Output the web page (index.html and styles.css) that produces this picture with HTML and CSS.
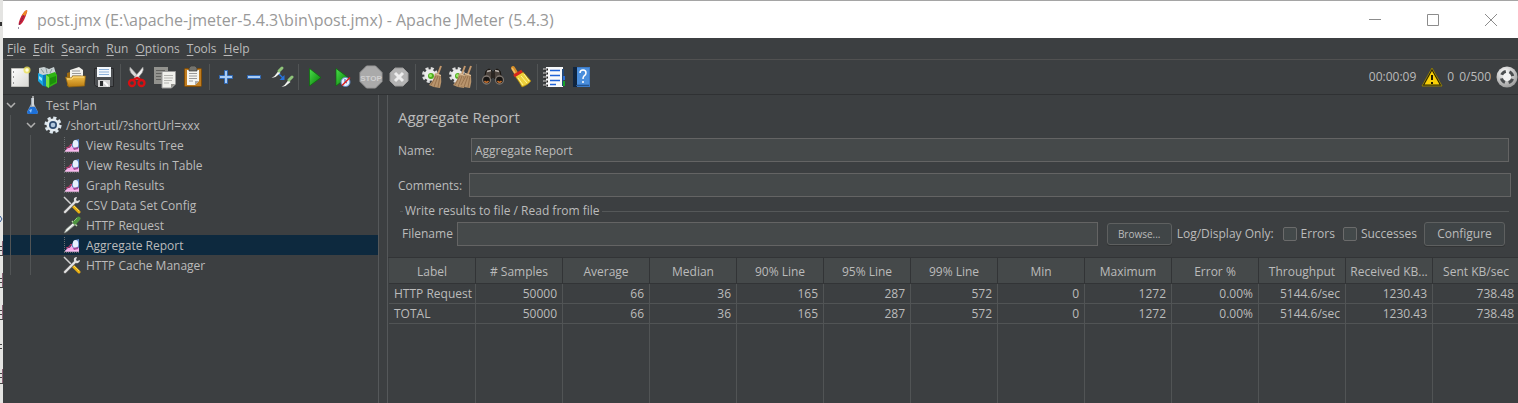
FILE: index.html
```html
<!DOCTYPE html>
<html lang="en">
<head>
<meta charset="utf-8">
<title>post.jmx - Apache JMeter (5.4.3)</title>
<link rel="stylesheet" href="styles.css">
</head>
<body>
<svg class="defs" aria-hidden="true">
  <defs>
    <linearGradient id="green" x1="0" y1="0" x2="1" y2="1"><stop offset="0" stop-color="#4be04b"/><stop offset="1" stop-color="#067806"/></linearGradient>
    <linearGradient id="gold" x1="0" y1="0" x2="0" y2="1"><stop offset="0" stop-color="#f2c04a"/><stop offset="1" stop-color="#b87a10"/></linearGradient>
    <linearGradient id="paper" x1="0" y1="0" x2="1" y2="1"><stop offset="0" stop-color="#ffffff"/><stop offset="1" stop-color="#d8d8d4"/></linearGradient>
    <radialGradient id="silver" cx=".4" cy=".3" r=".8"><stop offset="0" stop-color="#ffffff"/><stop offset="1" stop-color="#8f8f8f"/></radialGradient>
    <symbol id="i-chart" viewBox="0 0 18 18">
      <path d="M1.500 1v16M1 16.500h16" stroke="#6a6d6f" stroke-dasharray="1 1" fill="none"/>
      <path d="M2 15.500l2-3 3-1 2-3 4 3 3-1v5z" fill="#f9a9ea"/>
      <path d="M3 12l3-1 2-3 2 3" stroke="#c2356e" fill="none"/>
      <path d="M9 8l3-4 4-1v9l-3 1-4-2z" fill="#5f86c8"/>
      <ellipse cx="12.500" cy="8" rx="2.800" ry="4" fill="#e6f0ff"/>
      <path d="M10 12l5-1v2l-4 1z" fill="#a04a9a"/>
      <path d="M2 15h14" stroke="#fccdf5"/>
    </symbol>
    <symbol id="i-tools" viewBox="0 0 18 18">
      <path d="M1 1l9 9" stroke="#cfcfcf" stroke-width="1.500"/>
      <path d="M10 10l6 6" stroke="#e8ae12" stroke-width="3" stroke-linecap="round"/>
      <path d="M10 9l6 6" stroke="#ffdc4a"/>
      <path d="M2 16l10-10" stroke="#666" stroke-width="3.200" stroke-linecap="round"/>
      <path d="M2 16l10-10" stroke="#e4e4e4" stroke-width="2" stroke-linecap="round"/>
      <path d="M14 1q-4 0-3 4 1 3 4 2 2-1 2-3l-3 1-1-1z" fill="#dcdcdc"/>
    </symbol>
    <symbol id="i-pipette" viewBox="0 0 18 18">
      <path d="M1 17l2-4 7-6 2 2-7 6-3 2z" fill="#d9dfd9" stroke="#6c726c" stroke-width=".6"/>
      <path d="M3 15l7-7" stroke="#f6faf6"/>
      <path d="M9 5l5 5" stroke="#b8d8a8" stroke-width="1.500"/>
      <path d="M12 6.500l3.500-4" stroke="#4e9440" stroke-width="4" stroke-linecap="round"/>
      <path d="M11 5l3-3" stroke="#8cc878"/>
    </symbol>
    <symbol id="i-gear" viewBox="0 0 24 24">
      <circle cx="10" cy="10" r="6.500" fill="none" stroke="#dedede" stroke-width="3" stroke-dasharray="2.900 2.200"/>
      <circle cx="10" cy="10" r="5.700" fill="#ececec"/>
      <circle cx="11" cy="11" r="3" fill="#4fae1c"/><circle cx="10.500" cy="10.500" r="1.500" fill="#9be86a"/>
    </symbol>
    <symbol id="i-broom" viewBox="0 0 24 24">
      <path d="M21 1l-3 8" stroke="#c2976c" stroke-width="2"/>
      <path d="M15 8l6 2q1 7-1 13-6 0-11-3 5-5 6-12z" fill="#b8946c"/>
      <path d="M16 11l-5 9m7-9l-4 11m6-11l-2 11" stroke="#8a6440" stroke-width=".7" fill="none"/>
      <path d="M15 8.500l6 2" stroke="#e6c8a2"/>
    </symbol>
  </defs>
</svg>

<div class="desktop">
  <svg class="backdrop" width="3" height="403" viewBox="0 0 3 403" aria-hidden="true">
    <path d="M0 22h2v4H0z" fill="#333"/>
    <path d="M0 216l2 3-2 3" stroke="#355c9a" fill="none"/>
    <path d="M0 246.500h3M0 250.500h3M0 255.500h3M0 278.500h3M0 282.500h3M0 287.500h3M0 310.500h3M0 314.500h3M0 319.500h3M0 344.500h2M0 348.500h2M0 373.500h3M0 377.500h3M0 383.500h3" stroke="#444"/>
    <path d="M2.500 241v14M2.500 273v14M2.500 305v14M2.500 369v14" stroke="#8a6275"/>
  </svg>

  <div class="window">
    <header class="titlebar">
      <svg class="feather" width="16" height="20" viewBox="0 0 16 20" aria-hidden="true">
        <path d="M11 1q3-2 2 1-1 4-3 8-2 4-4 5-2 0-1-3 2-7 6-11z" fill="#cb2138"/>
        <path d="M11 1q3-2 2 1l-2 4q-2 0-3-1z" fill="#f08a24"/>
        <path d="M10 5L5 15" stroke="#7d1d4a" stroke-dasharray="2 1" fill="none"/>
        <path d="M4 18h1" stroke="#3a2350"/>
      </svg>
      <h1 class="window-title">post.jmx (E:\apache-jmeter-5.4.3\bin\post.jmx) - Apache JMeter (5.4.3)</h1>
      <div class="window-controls">
        <button class="window-button" aria-label="Minimize"><svg width="12" height="12" viewBox="0 0 12 12"><path d="M0 5.500h12" stroke="#8c8c8c"/></svg></button>
        <button class="window-button" aria-label="Maximize"><svg width="12" height="12" viewBox="0 0 12 12"><path d="M.5.5h11v11H.5z" stroke="#8c8c8c" fill="none"/></svg></button>
        <button class="window-button" aria-label="Close"><svg width="12" height="12" viewBox="0 0 12 12"><path d="M0 0l12 12M12 0L0 12" stroke="#8c8c8c"/></svg></button>
      </div>
    </header>

    <nav class="menubar">
      <button class="menu"><u>F</u>ile</button>
      <button class="menu"><u>E</u>dit</button>
      <button class="menu"><u>S</u>earch</button>
      <button class="menu"><u>R</u>un</button>
      <button class="menu"><u>O</u>ptions</button>
      <button class="menu"><u>T</u>ools</button>
      <button class="menu"><u>H</u>elp</button>
    </nav>

    <div class="toolbar">
      <button class="tool" aria-label="New"><svg viewBox="0 0 24 24"><path d="M3.500 3.500h17v18h-17z" fill="url(#paper)" stroke="#bdbdb9"/><path d="M5.500 6v2m0 3v2m0 4v2" stroke="#999"/><circle cx="19" cy="5" r="3.500" fill="#efe45a" opacity=".8"/><circle cx="19" cy="5" r="1.700" fill="#fffde0"/></svg></button>
      <button class="tool" aria-label="Templates"><svg viewBox="0 0 24 24"><path d="M3 3l5-1 5 2 5-2 2 7-8 4-9-3z" fill="#c9d2d4"/><path d="M5 4l3 4m2-5l1 5m5-4l-2 4" stroke="#8a9a9c"/><path d="M2 8l5 2v11l-5-5z" fill="#18a6e0"/><path d="M7 10l5-1v13l-5-1z" fill="#0a78b8"/><path d="M3 11l3 2v3l-3-2z" fill="#9be3ff"/><path d="M10 10l9-3 2 3v8l-9 5-2-2z" fill="#2fb512"/><path d="M10 10l3 2v11l-3-2z" fill="#77e043"/><path d="M14 13l6-2v6l-6 3z" fill="#1c8f0a"/></svg></button>
      <button class="tool" aria-label="Open"><svg viewBox="0 0 24 24"><path d="M3 8l3-1v14H3z" fill="#9b6a12"/><path d="M6 5l9-3 4 3v9H6z" fill="#f2f2ee"/><path d="M8 6h8M8 8.500h9M8 11h9" stroke="#999"/><path d="M1.500 12l6 1 1-2h13l-1 10-16 1z" fill="url(#gold)" stroke="#8f620f" stroke-width=".7"/><path d="M3 14h5l1-2h11" stroke="#ffdf87" fill="none"/></svg></button>
      <button class="tool" aria-label="Save"><svg viewBox="0 0 24 24"><path d="M2.500 3.500h19v18H4l-1.500-2z" fill="#4c4f52" stroke="#28292b"/><path d="M5 2h14v10H5z" fill="#f4f8fc"/><path d="M7 4.500h10M7 7h10M7 9.500h10" stroke="#8cb0d8"/><path d="M6 15h12v7H6z" fill="#d4d4d4"/><path d="M8 16h3v5H8z" fill="#2b2d2f"/><path d="M12 17l4 4" stroke="#fff" stroke-width="2"/></svg></button>
      <span class="tool-separator"></span>
      <button class="tool" aria-label="Cut"><svg viewBox="0 0 24 24"><path d="M5 2q-1 3 1 6l7 7 2-2z" fill="#dadada" stroke="#8c8c8c" stroke-width=".6"/><path d="M18 2q1 3-1 6l-6 7-2-2z" fill="#f0f0f0" stroke="#8c8c8c" stroke-width=".6"/><path d="M8 15l4-2 4 2" stroke="#d80f12" stroke-width="2.500" fill="none"/><ellipse cx="7" cy="18" rx="3" ry="3" fill="none" stroke="#d80f12" stroke-width="2.300"/><ellipse cx="16.500" cy="18" rx="3" ry="3" fill="none" stroke="#d80f12" stroke-width="2.300"/></svg></button>
      <button class="tool" aria-label="Copy"><svg viewBox="0 0 24 24"><path d="M1 2h14v17H1z" fill="#92928e"/><path d="M3 5.500h9M3 8.500h9M3 11.500h5M3 14.500h5" stroke="#62625f"/><path d="M9 6.500h13.500V19l-4 4H9z" fill="#f0f0ec" stroke="#999"/><path d="M11 10.500h9M11 13h9M11 15.500h8M11 18h5" stroke="#b4b4b0"/><path d="M18 23v-4h4z" fill="#92928e"/></svg></button>
      <button class="tool" aria-label="Paste"><svg viewBox="0 0 24 24"><rect x="3.500" y="3.500" width="17" height="18" rx="1" fill="#c07d20" stroke="#7f4c08"/><path d="M6 5h12v11l-4 4H6z" fill="#f5f5f1"/><path d="M8 8.500h8M8 11h8M8 13.500h8M8 16h4" stroke="#999"/><path d="M14 20v-4h4z" fill="#aaa"/><path d="M8 3l2-2h4l2 2v3H8z" fill="#74746f" stroke="#393936" stroke-width=".7"/></svg></button>
      <span class="tool-separator"></span>
      <button class="tool" aria-label="Expand all"><svg viewBox="0 0 24 24"><path d="M10.500 5.500h3v5h5v3h-5v5h-3v-5h-5v-3h5z" fill="#a9ccf5" stroke="#2f68b4"/></svg></button>
      <button class="tool" aria-label="Collapse all"><svg viewBox="0 0 24 24"><path d="M5.500 10.500h13v3h-13z" fill="#a9ccf5" stroke="#2f68b4"/></svg></button>
      <button class="tool" aria-label="Toggle"><svg viewBox="0 0 24 24"><path d="M1.500 13l3-2 4-5 2 2-5 4z" fill="#f2f4f0"/><path d="M9 6l3-3" stroke="#8fc47a" stroke-width="3" stroke-linecap="round"/><path d="M11.500 22l3-2 4-5 2 2-5 4z" fill="#f2f4f0"/><path d="M19 15l3-3" stroke="#8fc47a" stroke-width="3" stroke-linecap="round"/><path d="M9 9l4 4" stroke="#2874dc" stroke-width="1.300"/><path d="M14.500 10v5h-5z" fill="#2874dc"/></svg></button>
      <span class="tool-separator"></span>
      <button class="tool" aria-label="Start"><svg viewBox="0 0 24 24"><path d="M6.500 3.500L18 12.500 6.500 21z" fill="url(#green)" stroke="#0a6b0a" stroke-width=".7"/></svg></button>
      <button class="tool" aria-label="Start no pauses"><svg viewBox="0 0 24 24"><path d="M5 3.500L16.500 12 5 21z" fill="url(#green)" stroke="#0a6b0a" stroke-width=".7"/><circle cx="14.500" cy="17" r="4.500" fill="#e8f1ff" stroke="#5f88c6"/><path d="M14 14v3l2 1" stroke="#2a5cae" fill="none"/><path d="M11 20.500l8-8" stroke="#dc2222" stroke-width="1.600"/></svg></button>
      <button class="tool" aria-label="Stop"><svg viewBox="0 0 24 24"><path d="M7.500 1h9L23 7.500v9L16.500 23h-9L1 16.500v-9z" fill="#aaaaaa" stroke="#989898"/><text x="12" y="15.500" class="stop-text">STOP</text></svg></button>
      <button class="tool" aria-label="Shutdown"><svg viewBox="0 0 24 24"><path d="M8 3h8l5 5v8l-5 5H8l-5-5V8z" fill="#b3b3b3" stroke="#9a9a9a"/><path d="M8 8l8 8m0-8l-8 8" stroke="#ededed" stroke-width="3"/></svg></button>
      <span class="tool-separator"></span>
      <button class="tool" aria-label="Clear"><svg viewBox="0 0 24 24"><use href="#i-gear"/><use href="#i-broom"/></svg></button>
      <button class="tool" aria-label="Clear all"><svg viewBox="0 0 24 24"><use href="#i-gear" x="-1"/><use href="#i-broom" x="-4"/><use href="#i-broom" x="2"/></svg></button>
      <span class="tool-separator"></span>
      <button class="tool" aria-label="Search"><svg viewBox="0 0 24 24"><path d="M5 6l3-2 3 2v7l-8 2zM19 6l-3-2-3 2v7l8 2z" fill="#4a423c" stroke="#17130f"/><path d="M10 8h4v5h-4z" fill="#2a2521"/><path d="M6 6.500l4-1M14 5.500l4 1" stroke="#b8b1ab" stroke-width="1.300"/><circle cx="5.500" cy="15" r="4" fill="#171513" stroke="#7d756e" stroke-width="1.300"/><circle cx="18.500" cy="15" r="4" fill="#171513" stroke="#7d756e" stroke-width="1.300"/><path d="M3.500 16q2 2.500 4 0M16.500 16q2 2.500 4 0" stroke="#c6702e" stroke-width="1.500" fill="none"/></svg></button>
      <button class="tool" aria-label="Reset search"><svg viewBox="0 0 24 24"><path d="M4 3l3 5" stroke="#d68f28" stroke-width="4" stroke-linecap="round"/><path d="M3 3l3 5" stroke="#f0bd68" stroke-width="1.500"/><path d="M6 11l8-4 8 9q-3 4-9 6-2-4-7-11z" fill="#edd03a" stroke="#a07a08" stroke-width=".7"/><path d="M9 13l5 7m-2-9l6 7m-3-9l5 7" stroke="#fff59a" fill="none"/><path d="M5 11l8-5" stroke="#d5261c" stroke-width="3"/></svg></button>
      <span class="tool-separator"></span>
      <button class="tool" aria-label="Function helper"><svg viewBox="0 0 24 24"><path d="M4 2h17v20H4z" fill="#f8f9fb"/><path d="M21 4v17" stroke="#23487a" stroke-width="2"/><path d="M21 11h2v4h-2z" fill="#2b6fd6"/><path d="M21 16h2v5h-2z" fill="#17a22a"/><path d="M8 5.500h10M8 15.500h10" stroke="#1e62d6" stroke-width="1.500"/><path d="M8 10.500h10M8 19.500h6" stroke="#1e62d6" stroke-width="1.500"/><path d="M2 4.500h4M2 8.500h4M2 12.500h4M2 16.500h4M2 20.500h4" stroke="#222" stroke-width="2"/><path d="M1 4h4M1 8h4M1 12h4M1 16h4M1 20h4" stroke="#ddd"/></svg></button>
      <button class="tool" aria-label="Help"><svg viewBox="0 0 24 24"><path d="M3 2h17v20H3z" fill="#3b7ac8"/><path d="M3 2h4v20H3z" fill="#10253f"/><path d="M7 3h12v16H7z" fill="#4a8edc"/><path d="M6 20.500h13" stroke="#24558f"/><path d="M10 8q0-3 3-3t3 3q0 2-2 3-1 1-1 3m0 2v2" stroke="#fff" stroke-width="1.500" fill="none"/></svg></button>
      <div class="run-status">
        <span>00:00:09</span>
        <button class="warning"><svg width="22" height="20" viewBox="0 0 22 20" aria-hidden="true"><path d="M11 1l10 18H1z" fill="#282404" stroke="#8f7c08"/><path d="M11 4l7.500 13.500h-15z" fill="#f8cf08"/><path d="M11 8v5m0 2v2" stroke="#1d1a00" stroke-width="2"/></svg><span>0</span></button>
        <span>0/500</span>
        <svg width="22" height="22" viewBox="0 0 22 22" aria-hidden="true"><circle cx="11" cy="11" r="10.500" fill="url(#silver)"/><circle cx="11" cy="11" r="5.500" fill="none" stroke="#4a4d4f" stroke-width="3.500" stroke-dasharray="5 3.640" stroke-dashoffset="-1.800"/><circle cx="11" cy="11" r="4" fill="#f2f2f2"/></svg>
      </div>
    </div>

    <div class="workspace">
      <nav class="tree" aria-label="Test plan">
        <div class="node root">
          <svg width="10" height="6" viewBox="0 0 10 6" class="arrow"><path d="M1 1l4 4 4-4" stroke="#b0b0b0" stroke-width="1.500" fill="none"/></svg>
          <svg width="18" height="20" viewBox="0 0 18 20"><path d="M7 3h3v6l4 8q0 2-2 2H5q-2 0-2-2l4-8z" fill="#c4d2dc" opacity=".75"/><path d="M6 12h5l3 5q0 2-2 2H5q-2 0-2-2z" fill="#1d70d8"/><path d="M5 15l3-1-1 4z" fill="#8ec4ff"/><path d="M9 1v10" stroke="#fff"/></svg>
          <span>Test Plan</span>
        </div>
        <div class="branch">
          <div class="node group">
            <svg width="10" height="6" viewBox="0 0 10 6" class="arrow"><path d="M1 1l4 4 4-4" stroke="#b0b0b0" stroke-width="1.500" fill="none"/></svg>
            <svg width="18" height="18" viewBox="0 0 18 18"><circle cx="9" cy="9" r="7.300" fill="none" stroke="#dce6ee" stroke-width="2.600" stroke-dasharray="3.200 2.530"/><circle cx="9" cy="9" r="6.500" fill="#e4ebf0"/><circle cx="9" cy="9" r="4" fill="#2f4d72"/><circle cx="9" cy="9" r="2.300" fill="#b0c6dc"/></svg>
            <span>/short-utl/?shortUrl=xxx</span>
          </div>
          <div class="branch">
            <div class="node leaf"><svg width="18" height="18"><use href="#i-chart"/></svg><span>View Results Tree</span></div>
            <div class="node leaf"><svg width="18" height="18"><use href="#i-chart"/></svg><span>View Results in Table</span></div>
            <div class="node leaf"><svg width="18" height="18"><use href="#i-chart"/></svg><span>Graph Results</span></div>
            <div class="node leaf"><svg width="18" height="18"><use href="#i-tools"/></svg><span>CSV Data Set Config</span></div>
            <div class="node leaf"><svg width="18" height="18"><use href="#i-pipette"/></svg><span>HTTP Request</span></div>
            <div class="node leaf selected"><svg width="18" height="18"><use href="#i-chart"/></svg><span>Aggregate Report</span></div>
            <div class="node leaf"><svg width="18" height="18"><use href="#i-tools"/></svg><span>HTTP Cache Manager</span></div>
          </div>
        </div>
      </nav>

      <main class="report">
        <div class="settings">
          <h2 class="report-title">Aggregate Report</h2>
          <div class="field name-field"><label for="name">Name:</label><input id="name" type="text" value="Aggregate Report"></div>
          <div class="field comments-field"><label for="comments">Comments:</label><input id="comments" type="text"></div>
          <fieldset class="file-group">
            <legend>Write results to file / Read from file</legend>
            <div class="file-row">
              <label for="filename">Filename</label>
              <input id="filename" type="text">
              <button class="button small">Browse...</button>
              <span class="log-label">Log/Display Only:</span>
              <label class="check"><input type="checkbox">Errors</label>
              <label class="check"><input type="checkbox">Successes</label>
              <button class="button">Configure</button>
            </div>
          </fieldset>
        </div>
        <div class="table-area">
          <table class="results">
            <thead>
              <tr><th>Label</th><th># Samples</th><th>Average</th><th>Median</th><th>90% Line</th><th>95% Line</th><th>99% Line</th><th>Min</th><th>Maximum</th><th>Error %</th><th>Throughput</th><th>Received KB...</th><th>Sent KB/sec</th></tr>
            </thead>
            <tbody>
              <tr><td>HTTP Request</td><td>50000</td><td>66</td><td>36</td><td>165</td><td>287</td><td>572</td><td>0</td><td>1272</td><td>0.00%</td><td>5144.6/sec</td><td>1230.43</td><td>738.48</td></tr>
              <tr><td>TOTAL</td><td>50000</td><td>66</td><td>36</td><td>165</td><td>287</td><td>572</td><td>0</td><td>1272</td><td>0.00%</td><td>5144.6/sec</td><td>1230.43</td><td>738.48</td></tr>
              <tr class="filler"><td></td><td></td><td></td><td></td><td></td><td></td><td></td><td></td><td></td><td></td><td></td><td></td><td></td></tr>
            </tbody>
          </table>
        </div>
      </main>
    </div>
  </div>
</div>
</body>
</html>
```
FILE: styles.css
```css
* { box-sizing: border-box; }

body {
  margin: 0;
  background: #e4e4e2;
  color: #bbbbbb;
  font: 12px/16px "Open Sans", "Noto Sans", sans-serif;
}

button, input {
  font: inherit;
  color: inherit;
}

button {
  padding: 0;
  border: 0;
  background: none;
}

svg { display: block; flex: none; }

.defs { position: absolute; width: 0; height: 0; }

.desktop {
  display: flex;
  height: 100vh;
  overflow: hidden;
}

.backdrop { background: #e4e4e2; }

.window {
  flex: 1;
  min-width: 0;
  display: flex;
  flex-direction: column;
  background: #3c3f41;
}

/* Title bar */
.titlebar {
  display: flex;
  align-items: center;
  height: 38px;
  padding-left: 11px;
  border-top: 1px solid #a5a5a5;
  background: #ffffff;
  color: #999999;
}

.window-title {
  flex: 1;
  margin: 0 0 0 7px;
  font-size: 16px;
  line-height: 22px;
  font-weight: 400;
}

.window-controls { display: flex; padding-right: 4px; }

.window-button {
  display: grid;
  place-items: center;
  width: 46px;
  height: 30px;
  margin-left: 12px;
}

/* Menu bar */
.menubar {
  display: flex;
  gap: 7px;
  height: 22px;
  padding: 0 4px;
  border-bottom: 1px solid #515151;
}

.menu u { text-underline-offset: 2px; }

/* Toolbar */
.toolbar {
  display: flex;
  align-items: center;
  height: 35px;
  padding-left: 3px;
  border-bottom: 1px solid #2f3133;
}

.tool {
  display: grid;
  place-items: center;
  width: 28px;
  height: 28px;
}

.tool svg { width: 24px; height: 24px; }

.tool-separator {
  width: 1px;
  height: 26px;
  margin: 0 2px;
  background: #515455;
}

.stop-text {
  fill: #d0d0d0;
  font: 700 8px "Liberation Sans", sans-serif;
  text-anchor: middle;
}

.run-status {
  display: flex;
  align-items: center;
  gap: 5px;
  margin-left: auto;
}

.warning { display: flex; align-items: center; gap: 4px; }

/* Workspace */
.workspace { flex: 1; min-height: 0; display: flex; }

.tree {
  width: 376px;
  margin-right: 8px;
  border-right: 1px solid #55585a;
}

.node {
  display: flex;
  align-items: center;
  height: 20px;
}

.node span { padding-top: 2px; }

.root { gap: 4px; padding-left: 3px; }
.root .arrow { margin-right: 4px; }
.group { gap: 4px; padding-left: 23px; }
.group .arrow { margin-right: 4px; }
.leaf { gap: 5px; padding-left: 60px; }

.branch {
  background: linear-gradient(#515455, #515455) 7px 0 / 1px 100% no-repeat;
}

.branch .branch { background-position-x: 27px; }

.selected {
  background:
    linear-gradient(#515455, #515455) 7px 0 / 1px 100% no-repeat,
    linear-gradient(#515455, #515455) 27px 0 / 1px 100% no-repeat,
    #0d293e;
}

/* Report panel */
.report {
  flex: 1;
  min-width: 0;
  display: flex;
  flex-direction: column;
  border-left: 1px solid #55585a;
}

.settings { padding: 11px 7px 11px 10px; }

.report-title {
  margin: 0;
  font-size: 15px;
  line-height: 22px;
  font-weight: 400;
}

.field { display: flex; align-items: center; }
.field label { padding-top: 2px; }
.name-field { margin: 10px 2px 11px 0; }
.name-field label { width: 73px; }
.comments-field label { width: 71px; }

input[type="text"] {
  flex: 1;
  min-width: 0;
  height: 24px;
  padding: 0 3px;
  border: 1px solid #646464;
  border-radius: 0;
  background: #45494a;
}

.file-group {
  min-width: 0;
  margin: 6px 2px 0;
  padding: 0;
  border: 0;
  border-top: 1px solid #555859;
}

.file-group legend { margin-left: 3px; padding: 0 2px; }

.file-row {
  display: flex;
  align-items: center;
  padding: 3px 4px 0 2px;
}

.file-row input[type="text"] { margin: 0 9px 0 4px; }

.button {
  width: 81px;
  height: 24px;
  border: 1px solid #5e6060;
  border-radius: 3px;
  background: #404547;
  box-shadow: 0 1px 0 #323435;
}

.button.small {
  width: 65px;
  height: 22px;
  font-size: 10px;
}

.log-label { margin: 0 9px 0 5px; }

.check {
  display: flex;
  align-items: center;
  gap: 4px;
  margin-right: 7px;
}

.check + .check { margin-left: 1px; }

.check input {
  appearance: none;
  width: 14px;
  height: 14px;
  margin: 0;
  border: 1px solid #6b6b6b;
  border-radius: 2px;
  background: #43494a;
}

/* Results table */
.table-area {
  flex: 1;
  min-height: 0;
  overflow: hidden;
  border-top: 1px solid #323436;
}

.results {
  width: calc(100% + 1px);
  height: 100%;
  margin-left: 1px;
  table-layout: fixed;
  border-spacing: 0;
}

.results th {
  height: 26px;
  padding: 2px 0 0;
  border-right: 1px solid #323436;
  border-bottom: 1px solid #323436;
  background: #45494a;
  font-weight: 400;
  white-space: nowrap;
}

.results td {
  height: 20px;
  padding: 0 5px;
  border-right: 1px solid #515455;
  border-bottom: 1px solid #515455;
  text-align: right;
  white-space: nowrap;
}

.results td:first-child { text-align: left; }

.results .filler td { height: auto; border-bottom: 0; }
```
